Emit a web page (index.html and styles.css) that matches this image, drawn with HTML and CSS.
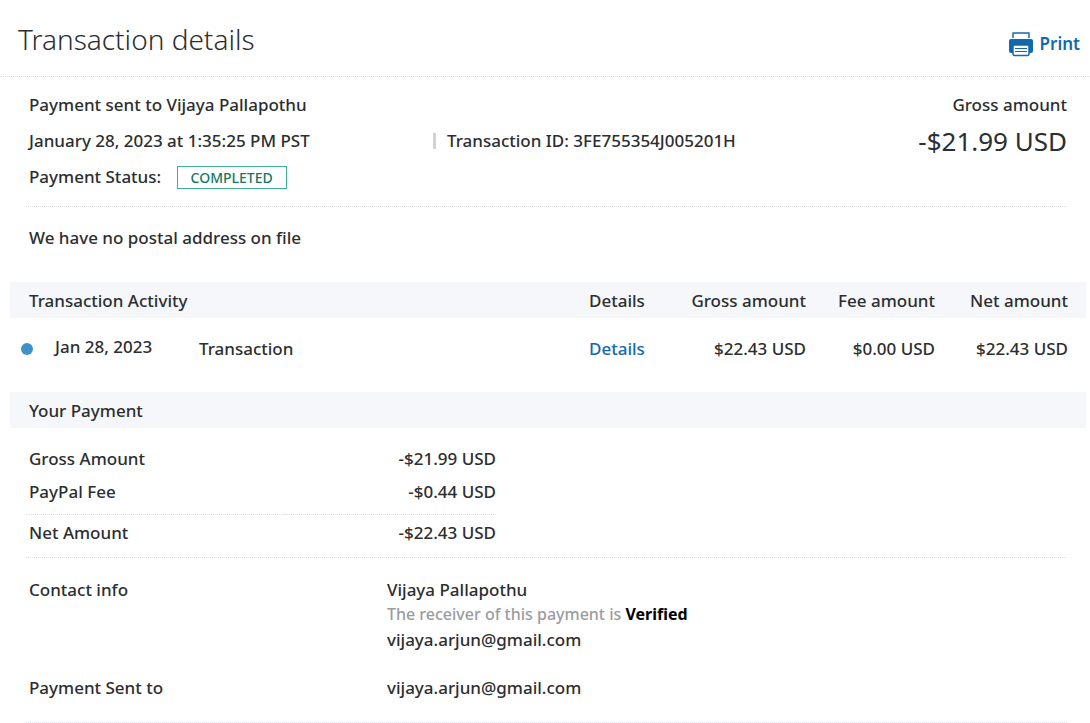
FILE: index.html
```html
<!doctype html>
<html lang="en">
    <head>
        <meta charset="UTF-8" />
        <meta name="viewport" content="width=device-width, initial-scale=1.0" />
        <title>Transaction details</title>
        <link rel="stylesheet" href="styles.css">
    </head>
    <body>
        <header class="page-header">
            <h1>Transaction details</h1>
            <a href="#" class="print" onclick="window.print()">
                <svg width="24" height="26" viewBox="0 0 24 26" aria-hidden="true">
                    <path d="M4 7V2h16v5" fill="none" stroke="#1269ad" stroke-width="1.500" stroke-linejoin="round" />
                    <path d="M2 8h20a2 2 0 0 1 2 2v10a2 2 0 0 1-2 2H2a2 2 0 0 1-2-2V10a2 2 0 0 1 2-2z" fill="#1269ad" />
                    <path d="M4 14h16v9a1.500 1.500 0 0 1-1.500 1.500h-13A1.500 1.500 0 0 1 4 23z" fill="#fff" stroke="#1269ad" stroke-width="1.500" />
                    <path d="M6 17.500h12M6 20.500h12" stroke="#1269ad" />
                </svg>
                Print
            </a>
        </header>

        <main>
            <section class="summary">
                <div class="summary-info">
                    <div>Payment sent to Vijaya Pallapothu</div>
                    <div class="summary-row">
                        <span class="date">January 28, 2023 at 1:35:25 PM PST</span>
                        <span class="transaction-id">Transaction ID: 3FE755354J005201H</span>
                    </div>
                    <div>Payment Status: <span class="status">COMPLETED</span></div>
                </div>
                <div class="summary-total">
                    <div>Gross amount</div>
                    <div class="total">-$21.99 USD</div>
                </div>
            </section>

            <p class="address">We have no postal address on file</p>

            <table class="activity">
                <thead>
                    <tr>
                        <th colspan="3" class="activity-title">Transaction Activity</th>
                        <th class="col-details">Details</th>
                        <th class="col-gross amount">Gross amount</th>
                        <th class="col-fee amount">Fee amount</th>
                        <th class="col-net amount">Net amount</th>
                    </tr>
                </thead>
                <tbody>
                    <tr>
                        <td class="col-dot"><span class="dot"></span></td>
                        <td class="col-date">Jan 28, 2023</td>
                        <td>Transaction</td>
                        <td><a href="#">Details</a></td>
                        <td class="amount">$22.43 USD</td>
                        <td class="amount">$0.00 USD</td>
                        <td class="col-net amount">$22.43 USD</td>
                    </tr>
                </tbody>
            </table>

            <h2>Your Payment</h2>
            <div class="payment">
                <table class="payment-table">
                    <tr>
                        <th>Gross Amount</th>
                        <td class="amount">-$21.99 USD</td>
                    </tr>
                    <tr class="fee">
                        <th>PayPal Fee</th>
                        <td class="amount">-$0.44 USD</td>
                    </tr>
                    <tr class="net">
                        <th>Net Amount</th>
                        <td class="amount">-$22.43 USD</td>
                    </tr>
                </table>
            </div>

            <dl class="contact">
                <dt>Contact info</dt>
                <dd>
                    <div>Vijaya Pallapothu</div>
                    <div class="receiver">The receiver of this payment is <strong>Verified</strong></div>
                    <div>vijaya.arjun@gmail.com</div>
                </dd>
                <dt>Payment Sent to</dt>
                <dd>vijaya.arjun@gmail.com</dd>
            </dl>
        </main>
    </body>
</html>
```
FILE: styles.css
```css
body {
    margin: 0;
    font-family: "Noto Sans", "Open Sans", sans-serif;
    font-size: 17px;
    font-weight: 500;
    line-height: 24px;
    color: #2c2e2f;
    background: #fff;
}
a {
    color: #1269ad;
    text-decoration: none;
}
.page-header {
    display: flex;
    justify-content: space-between;
    align-items: center;
    height: 76px;
    padding: 0 10px 0 18px;
    border-bottom: 1px dotted #dcdfe2;
}
h1 {
    margin: 0;
    padding-top: 2px;
    font-size: 28px;
    font-weight: 300;
    line-height: 40px;
}
.print {
    display: flex;
    align-items: center;
    gap: 7px;
    padding-top: 12px;
    font-weight: 600;
}
.summary {
    display: flex;
    justify-content: space-between;
    margin: 0 23px 0 26px;
    padding: 10px 0 11px 3px;
    line-height: 36px;
    border-bottom: 1px dotted #dcdfe2;
}
.summary-info {
    flex: 1;
}
.summary-row {
    display: flex;
    align-items: center;
}
.date {
    width: 404px;
}
.transaction-id {
    padding-left: 11px;
    border-left: 3px solid #d0d3d6;
    line-height: 16px;
}
.status {
    display: inline-block;
    margin-left: 11px;
    padding: 0 13px;
    border: 1px solid #3fb394;
    color: #137a5f;
    font-size: 14px;
    line-height: 21px;
}
.summary-total {
    text-align: right;
}
.total {
    font-size: 26px;
    font-weight: 400;
}
.address {
    margin: 0 29px;
    padding: 19px 0 32px;
}
table {
    border-collapse: collapse;
}
th {
    font-weight: 500;
    text-align: left;
}
th,
td {
    padding: 0;
}
.amount {
    text-align: right;
}
.activity {
    width: calc(100% - 14px);
    margin: 0 4px 0 10px;
}
.activity th {
    height: 34px;
    padding-top: 2px;
    background: #f5f7fa;
}
.activity td {
    padding: 19px 0 31px;
}
.activity .activity-title {
    padding-left: 19px;
}
.col-details {
    width: 100px;
}
.col-gross {
    width: 117px;
}
.col-fee {
    width: 129px;
}
.activity .col-net {
    width: 133px;
    padding-right: 18px;
}
.activity .col-dot {
    width: 34px;
    padding-left: 11px;
}
.activity .col-date {
    width: 144px;
    padding-top: 17px;
    padding-bottom: 33px;
}
.dot {
    display: block;
    width: 12px;
    height: 12px;
    border-radius: 50%;
    background: #4191c9;
}
h2 {
    margin: 0 4px 0 10px;
    padding: 7px 19px 5px;
    font-size: 17px;
    font-weight: 500;
    line-height: 24px;
    background: #f5f7fa;
}
.payment {
    margin: 0 23px 0 26px;
    padding: 14px 0 7px;
    border-bottom: 1px dotted #dcdfe2;
}
.payment-table {
    width: 470px;
}
.payment-table th,
.payment-table td {
    height: 33px;
}
.payment-table th {
    padding-left: 3px;
}
.payment-table .fee th,
.payment-table .fee td {
    padding-bottom: 6px;
}
.payment-table .net th,
.payment-table .net td {
    height: 35px;
    border-top: 1px dotted #dcdfe2;
}
.contact {
    display: grid;
    grid-template-columns: 358px 1fr;
    row-gap: 23px;
    margin: 0 23px 0 26px;
    padding: 19px 0 22px 3px;
    line-height: 25px;
    border-bottom: 1px dotted #dcdfe2;
}
.contact dd {
    margin: 0;
}
.receiver {
    color: #9a9c9e;
    font-size: 16px;
}
.receiver strong {
    color: #000;
}
```
